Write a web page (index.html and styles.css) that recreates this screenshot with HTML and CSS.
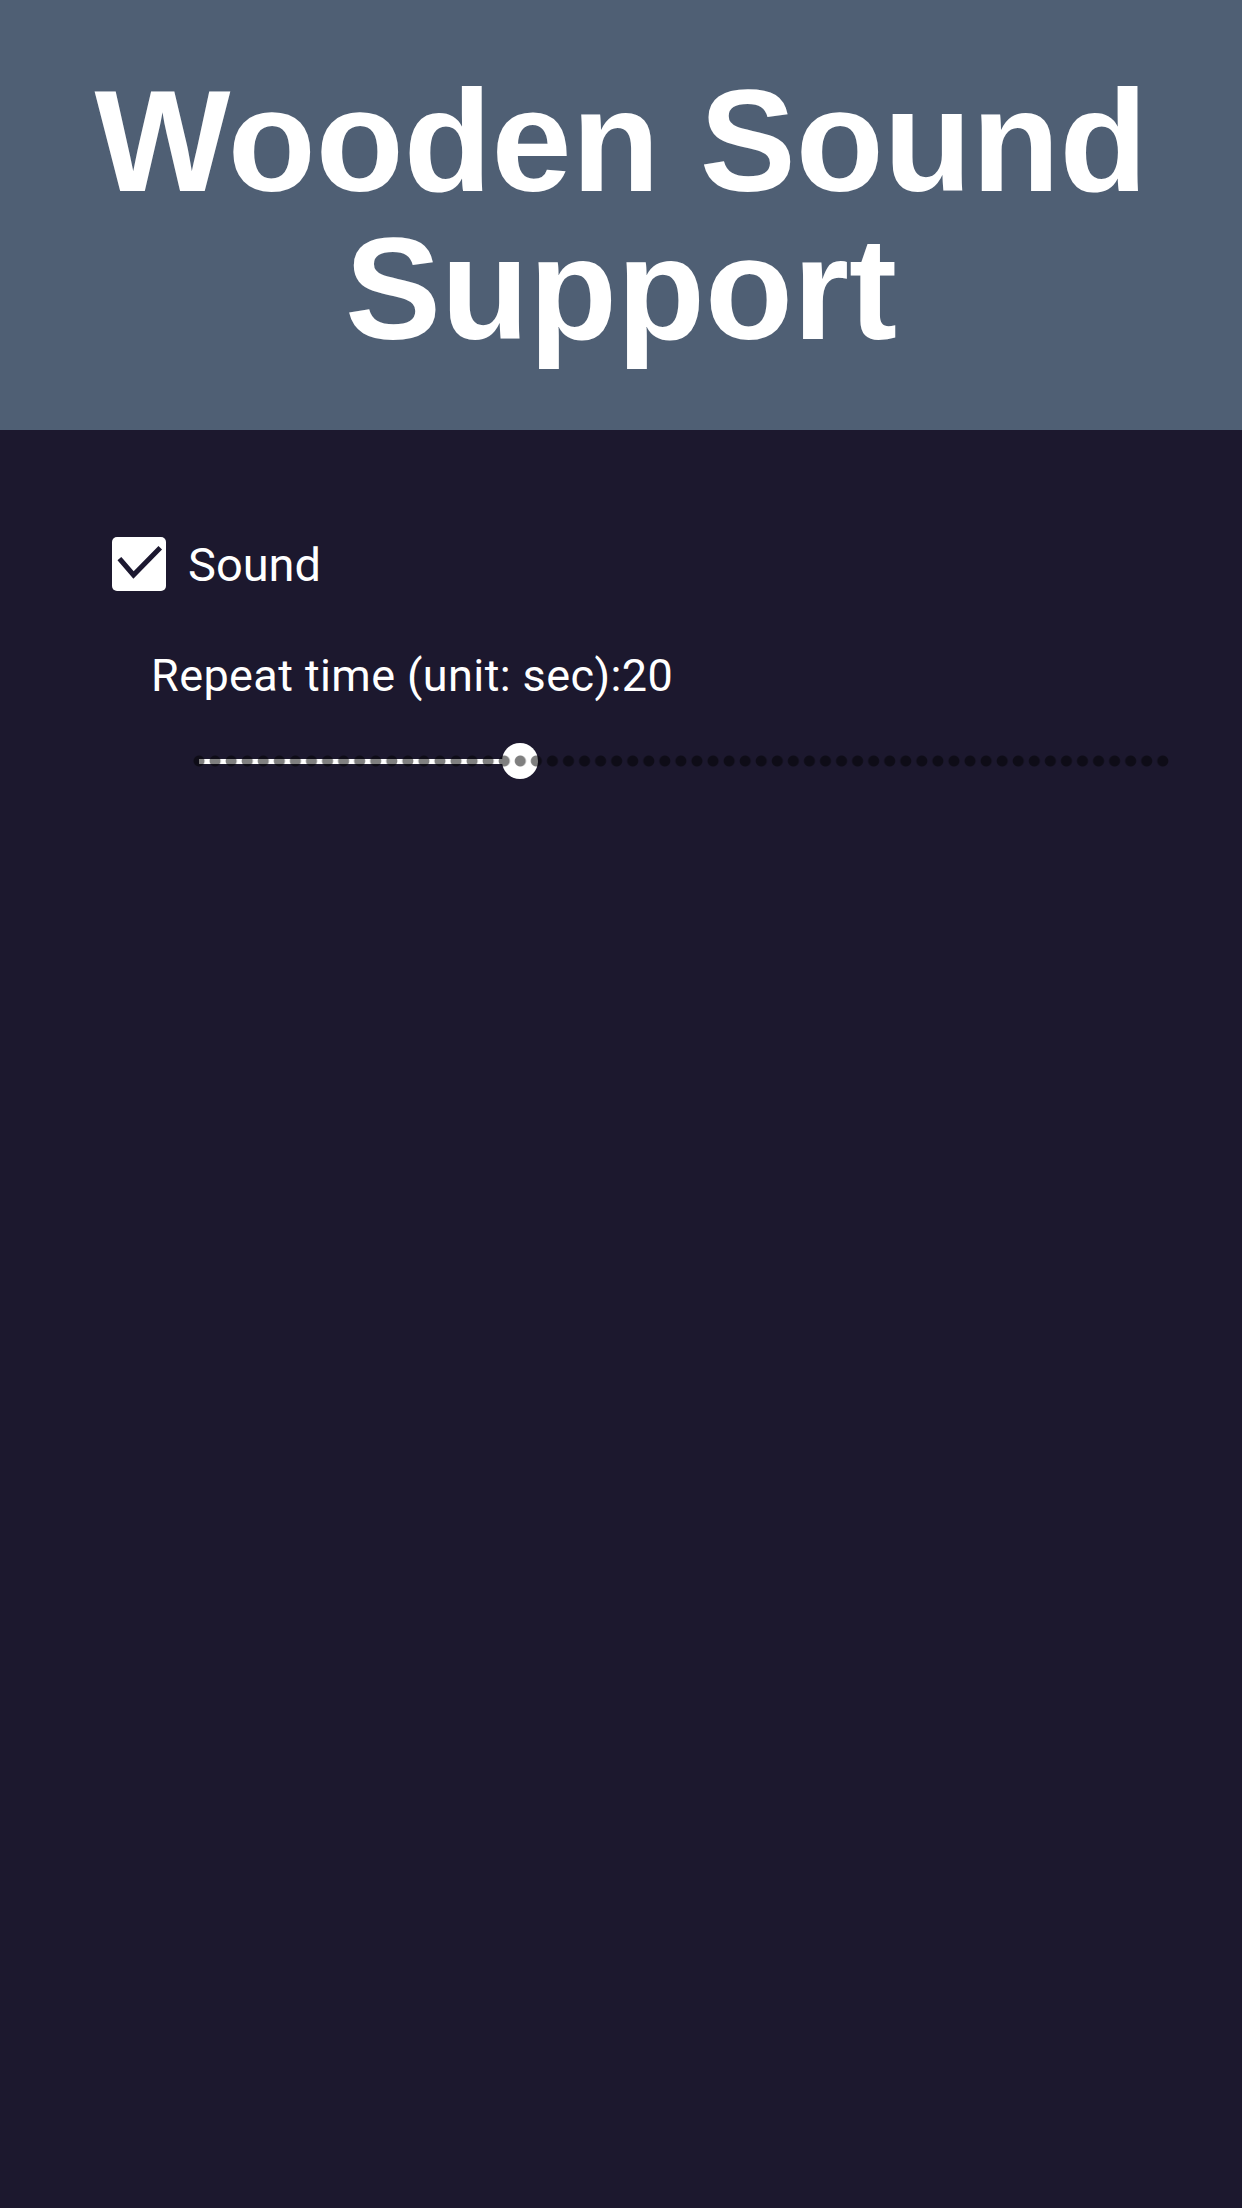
FILE: index.html
```html
<!DOCTYPE html>
<html>
<head>
<meta charset="utf-8">
<link rel="stylesheet" href="styles.css">
</head>
<body>
<header class="header">
  <h1 class="title">Wooden Sound<br>Support</h1>
</header>
<main class="content">
  <label class="check-row">
    <span class="checkbox">
      <svg viewBox="0 0 54 54" width="54" height="54"><path d="M9 23.5 L21.5 38 L46.5 12.5" fill="none" stroke="#1c1830" stroke-width="5" stroke-linecap="square" stroke-linejoin="miter"/></svg>
    </span>
    <span class="check-label">Sound</span>
  </label>
  <div class="repeat-label">Repeat time (unit: sec):20</div>
  <div class="slider">
    <div class="slider-active" style="width: 321px"></div>
    <div class="slider-thumb" style="left: 329px"></div>
    <div class="slider-ticks"></div>
  </div>
</main>
</body>
</html>
```
FILE: styles.css
```css
html, body {
  margin: 0;
  padding: 0;
}
body {
  background: #1c182e;
  width: 1242px;
  height: 2208px;
  overflow: hidden;
}
.header {
  background: #4f5f74;
  height: 430px;
  box-sizing: border-box;
  padding-top: 68px;
}
.title {
  margin: 0;
  font-family: "Liberation Sans", Arial, sans-serif;
  font-weight: bold;
  font-size: 144px;
  line-height: 148px;
  color: #ffffff;
  text-align: center;
}
.content {
  padding: 106px 0 0 112px;
}
.check-row {
  display: flex;
  align-items: center;
  gap: 22px;
  height: 56px;
}
.checkbox {
  width: 54px;
  height: 54px;
  background: #ffffff;
  border-radius: 5px;
  display: flex;
}
.check-label {
  font-family: Roboto, "Noto Sans", sans-serif;
  font-size: 47px;
  line-height: 56px;
  color: #ffffff;
  position: relative;
  top: 1px;
}
.repeat-label {
  margin: 58px 0 0 39px;
  font-family: Roboto, "Noto Sans", sans-serif;
  font-size: 45px;
  line-height: 52px;
  letter-spacing: 0.4px;
  color: #ffffff;
}
.slider {
  position: relative;
  margin: 41px 0 0 79px;
  width: 980px;
  height: 36px;
}
.slider-active {
  position: absolute;
  left: 8px;
  top: 16px;
  height: 5px;
  background: #ffffff;
}
.slider-thumb {
  position: absolute;
  top: 0;
  width: 36px;
  height: 36px;
  margin-left: -18px;
  border-radius: 50%;
  background: #ffffff;
}
.slider-ticks {
  position: absolute;
  left: 0;
  top: 0;
  width: 100%;
  height: 100%;
  background-image: radial-gradient(circle at center, rgba(0,0,0,0.5) 5px, rgba(0,0,0,0) 6px);
  background-size: calc(100% / 61) 100%;
  background-repeat: repeat-x;
}
```
